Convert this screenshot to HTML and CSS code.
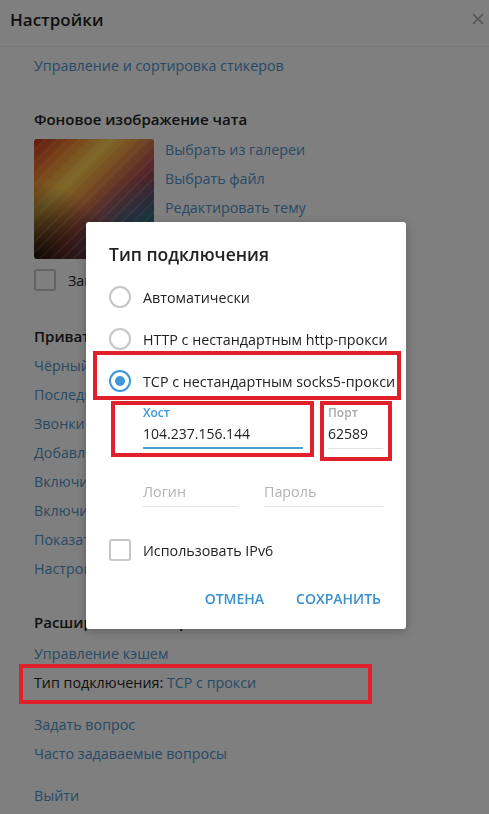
FILE: index.html
```html
<!DOCTYPE html>
<html lang="ru">
<head>
  <meta charset="UTF-8" />
  <meta name="viewport" content="width=device-width, initial-scale=1.0"/>
  <title>Настройки</title>
  <link rel="stylesheet" href="styles.css">
</head>
<body>

  <!-- Settings page (behind the modal) -->
  <div class="settings">
    <div class="header">
      <span class="header-title">Настройки</span>
      <svg class="close" width="12" height="12" viewBox="0 0 12 12">
        <path d="M1 1L11 11M11 1L1 11" stroke="#a8a8a8" stroke-width="1.6" fill="none"/>
      </svg>
    </div>

    <div class="content">
      <a class="link">Управление и сортировка стикеров</a>

      <div class="section-title bg-title">Фоновое изображение чата</div>
      <div class="bg-row">
        <div class="bg-thumb"></div>
        <div class="bg-links">
          <a class="link">Выбрать из галереи</a>
          <a class="link">Выбрать файл</a>
          <a class="link">Редактировать тему</a>
        </div>
      </div>
      <div class="check-row">
        <span class="checkbox"></span>
        <span>Замостить фон</span>
      </div>

      <div class="section-title privacy-title">Приватность и безопасность</div>
      <div class="privacy-list">
        <a class="link">Чёрный список</a>
        <a class="link">Последняя активность</a>
        <a class="link">Звонки</a>
        <a class="link">Добавление в группы</a>
        <a class="link">Включить код-пароль</a>
        <a class="link">Включить двухэтапную аутентификацию</a>
        <a class="link">Показать все сеансы</a>
        <a class="link">Настройки самоуничтожения</a>
      </div>

      <div class="section-title advanced-title">Расширенные настройки</div>
      <a class="link">Управление кэшем</a>
      <div class="conn-row">
        Тип подключения: <span class="link-inline">TCP с прокси</span>
        <div class="mark mark-conn"></div>
      </div>

      <a class="link gap-top">Задать вопрос</a>
      <a class="link">Часто задаваемые вопросы</a>

      <a class="link gap-top">Выйти</a>
    </div>
  </div>

  <div class="overlay"></div>

  <!-- Connection type dialog -->
  <div class="dialog">
    <div class="dialog-title">Тип подключения</div>

    <div class="radio-row">
      <span class="radio"></span>
      <span>Автоматически</span>
    </div>
    <div class="radio-row">
      <span class="radio"></span>
      <span>HTTP с нестандартным http-прокси</span>
    </div>
    <div class="radio-row">
      <span class="radio on"></span>
      <span>TCP с нестандартным socks5-прокси</span>
      <div class="mark mark-tcp"></div>
    </div>

    <div class="field-row host-row">
      <div class="field field-host">
        <div class="field-label active">Хост</div>
        <div class="field-value active">104.237.156.144</div>
        <div class="mark mark-host"></div>
      </div>
      <div class="field field-port">
        <div class="field-label">Порт</div>
        <div class="field-value">62589</div>
        <div class="mark mark-port"></div>
      </div>
    </div>

    <div class="field-row login-row">
      <div class="field field-login"><div class="placeholder">Логин</div></div>
      <div class="field field-pass"><div class="placeholder">Пароль</div></div>
    </div>

    <div class="check-row ipv6-row">
      <span class="checkbox"></span>
      <span>Использовать IPv6</span>
    </div>

    <div class="dialog-buttons">
      <button>Отмена</button>
      <button>Сохранить</button>
    </div>
  </div>

</body>
</html>
```

FILE: styles.css
```css
body {
  margin: 0;
  width: 489px;
  height: 814px;
  overflow: hidden;
  background: #fff;
  font-family: "Open Sans", "Noto Sans", sans-serif;
  font-size: 14.3px;
  color: #222;
}

/* settings page */
.header {
  height: 46px;
  border-bottom: 1px solid #ececec;
  display: flex;
  justify-content: space-between;
  align-items: flex-start;
  padding: 0 5px 0 10px;
}
.header-title {
  font-size: 17px;
  font-weight: 600;
  line-height: 24px;
  margin-top: 8px;
}
.close {
  margin-top: 13px;
}
.content {
  padding: 4px 0 0 34px;
}
.link {
  display: block;
  height: 29px;
  line-height: 29px;
  color: #4f94cc;
  white-space: nowrap;
}
.link-inline {
  color: #4f94cc;
}
.section-title {
  height: 29px;
  line-height: 29px;
  font-size: 15px;
  font-weight: 600;
  white-space: nowrap;
}
.bg-title {
  margin-top: 25px;
}
.bg-row {
  display: flex;
  gap: 11px;
  margin-top: 1px;
}
.bg-thumb {
  width: 120px;
  height: 120px;
  margin-top: 4px;
  border-radius: 3px;
  background:
    repeating-linear-gradient(-45deg, rgba(255,255,255,0.09) 0 2px, transparent 2px 8px),
    radial-gradient(ellipse at 0% 100%, rgba(18,8,4,0.95) 0%, rgba(18,8,4,0) 45%),
    radial-gradient(ellipse at 100% 100%, #20909a 0%, rgba(32,144,154,0) 50%),
    linear-gradient(135deg, #c83220 0%, #f08830 18%, #ffd050 32%, #f0a040 42%, #b85050 58%, #6a3a60 74%, #2a5060 88%, #20808a 100%);
}
.check-row {
  display: flex;
  align-items: center;
  gap: 12px;
  height: 22px;
  margin-top: 10px;
  white-space: nowrap;
}
.checkbox {
  flex: none;
  width: 22px;
  height: 22px;
  box-sizing: border-box;
  border: 2px solid #c6c6c6;
  border-radius: 3px;
}
.privacy-title {
  margin-top: 31px;
}
.advanced-title {
  margin-top: 25px;
  margin-bottom: 2px;
}
.conn-row {
  position: relative;
  height: 29px;
  line-height: 29px;
}
.gap-top {
  margin-top: 13px;
}

/* modal */
.overlay {
  position: fixed;
  inset: 0;
  background: rgba(0,0,0,0.5);
  z-index: 1;
}
.dialog {
  position: absolute;
  left: 86px;
  top: 222px;
  width: 320px;
  height: 407px;
  box-sizing: border-box;
  padding: 20px 0 0 23px;
  background: #fff;
  border-radius: 3px;
  box-shadow: 0 2px 10px rgba(0,0,0,0.25);
  z-index: 2;
}
.dialog-title {
  font-size: 17.5px;
  font-weight: 600;
  line-height: 24px;
  margin-bottom: 10px;
}
.radio-row {
  position: relative;
  display: flex;
  align-items: center;
  gap: 12px;
  height: 42px;
  white-space: nowrap;
}
.radio {
  position: relative;
  width: 22px;
  height: 22px;
  box-sizing: border-box;
  border: 2px solid #c6c6c6;
  border-radius: 50%;
}
.radio.on {
  border-color: #3d97d6;
}
.radio.on::after {
  content: "";
  position: absolute;
  left: 4px;
  top: 4px;
  width: 10px;
  height: 10px;
  border-radius: 50%;
  background: #3d97d6;
}
.field-row {
  display: flex;
  padding-left: 34px;
}
.host-row {
  gap: 25px;
  margin-top: 3px;
}
.field {
  position: relative;
}
.field-host { width: 160px; }
.field-port { width: 55px; }
.field-label {
  font-size: 12px;
  font-weight: 600;
  line-height: 16px;
  color: #a9a9a9;
}
.field-label.active {
  color: #3d97d6;
}
.field-value {
  font-size: 14px;
  line-height: 22px;
  margin-top: 2px;
  padding-bottom: 3px;
  border-bottom: 1px solid #e2e2e2;
}
.field-value.active {
  padding-bottom: 2px;
  border-bottom: 2px solid #4a9ed8;
}
.login-row {
  gap: 26px;
  margin-top: 33px;
}
.field-login { width: 95px; }
.field-pass { width: 119px; }
.placeholder {
  line-height: 20px;
  padding-bottom: 4px;
  color: #b3b3b3;
  border-bottom: 1px solid #e2e2e2;
}
.ipv6-row {
  margin-top: 32px;
}
.dialog-buttons {
  display: flex;
  justify-content: flex-end;
  gap: 32px;
  padding-right: 25px;
  margin-top: 28px;
}
.dialog-buttons button {
  padding: 0;
  border: none;
  background: none;
  font-family: inherit;
  font-size: 14px;
  font-weight: 600;
  line-height: 20px;
  text-transform: uppercase;
  color: #3a8fcc;
  cursor: pointer;
}

/* red annotation frames */
.mark {
  position: absolute;
  border: 4px solid #e1202b;
  box-sizing: border-box;
  z-index: 3;
  pointer-events: none;
}
.mark-conn {
  left: -15px;
  top: -4px;
  width: 353px;
  height: 40px;
}
.mark-tcp {
  left: -16px;
  top: -9px;
  width: 308px;
  height: 49px;
}
.mark-host {
  left: -32px;
  top: -4px;
  width: 203px;
  height: 56px;
}
.mark-port {
  left: -8px;
  top: -4px;
  width: 72px;
  height: 60px;
}
```
